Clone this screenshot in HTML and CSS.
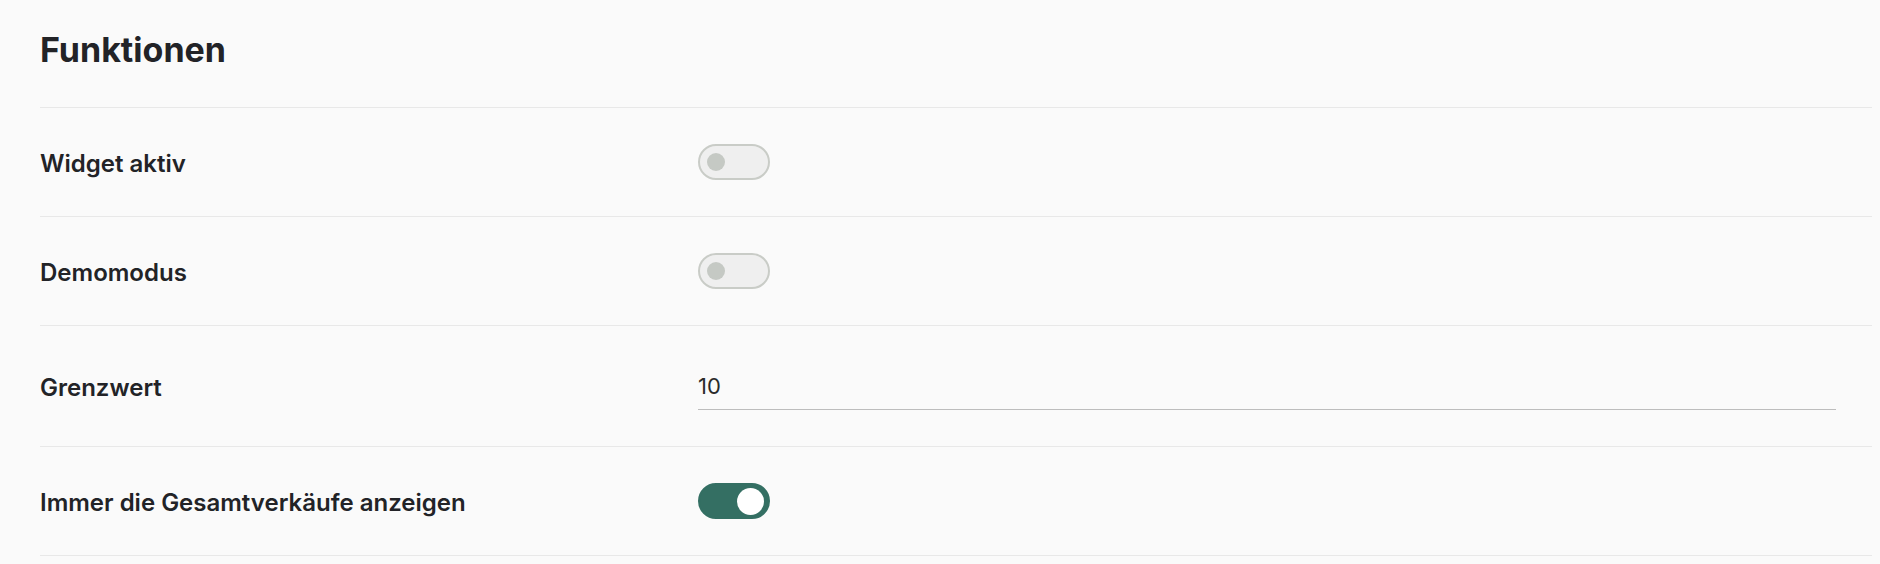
FILE: index.html
```html
<!DOCTYPE html>
<html lang="de">
<head>
<meta charset="utf-8">
<title>Funktionen</title>
<link rel="stylesheet" href="styles.css">
</head>
<body>
<section class="panel">
  <header class="panel-head">
    <h1 class="title">Funktionen</h1>
  </header>
  <div class="rows">
    <div class="row">
      <div class="label">Widget aktiv</div>
      <div class="control">
        <span class="toggle"><span class="knob"></span></span>
      </div>
    </div>
    <div class="row">
      <div class="label">Demomodus</div>
      <div class="control">
        <span class="toggle"><span class="knob"></span></span>
      </div>
    </div>
    <div class="row">
      <div class="label">Grenzwert</div>
      <div class="control">
        <div class="field"><span class="field-value">10</span></div>
      </div>
    </div>
    <div class="row">
      <div class="label">Immer die Gesamtverkäufe anzeigen</div>
      <div class="control">
        <span class="toggle toggle-on"><span class="knob"></span></span>
      </div>
    </div>
  </div>
</section>
</body>
</html>
```

FILE: styles.css
```css
html, body {
  margin: 0;
  padding: 0;
  background: #fafafa;
}

body {
  font-family: Inter, "Noto Sans", "Liberation Sans", sans-serif;
  color: #222327;
}

.panel {
  padding: 0 8px 0 40px;
}

.panel-head {
  padding: 28px 0 35px;
  border-bottom: 1px solid #e8e8e8;
}

.title {
  margin: 0;
  font-size: 34px;
  line-height: 44px;
  font-weight: 700;
}

.row {
  display: grid;
  grid-template-columns: 658px 1fr;
  align-items: center;
  padding: 36px 0;
  border-bottom: 1px solid #e8e8e8;
}

.label {
  font-size: 24px;
  line-height: 30px;
  font-weight: 600;
  padding-top: 3px;
}

.control {
  padding-right: 36px;
  display: flex;
  align-items: center;
}

.toggle {
  box-sizing: border-box;
  width: 72px;
  height: 36px;
  border: 2px solid #c9ccc7;
  border-radius: 18px;
  background: #efefef;
  display: flex;
  align-items: center;
  justify-content: flex-start;
  padding: 0 7px;
}

.toggle .knob {
  width: 18px;
  height: 18px;
  border-radius: 50%;
  background: #c5c9c4;
}

.toggle-on {
  background: #346f63;
  border-color: #346f63;
  justify-content: flex-end;
  padding: 0 4px;
}

.toggle-on .knob {
  width: 27px;
  height: 27px;
  background: #ffffff;
}

.field {
  flex: 1;
  box-sizing: border-box;
  height: 48px;
  display: flex;
  align-items: center;
  border-bottom: 1px solid #bdbdbd;
}

.field-value {
  font-size: 22px;
  font-weight: 400;
  color: #2a2a2a;
}
```
